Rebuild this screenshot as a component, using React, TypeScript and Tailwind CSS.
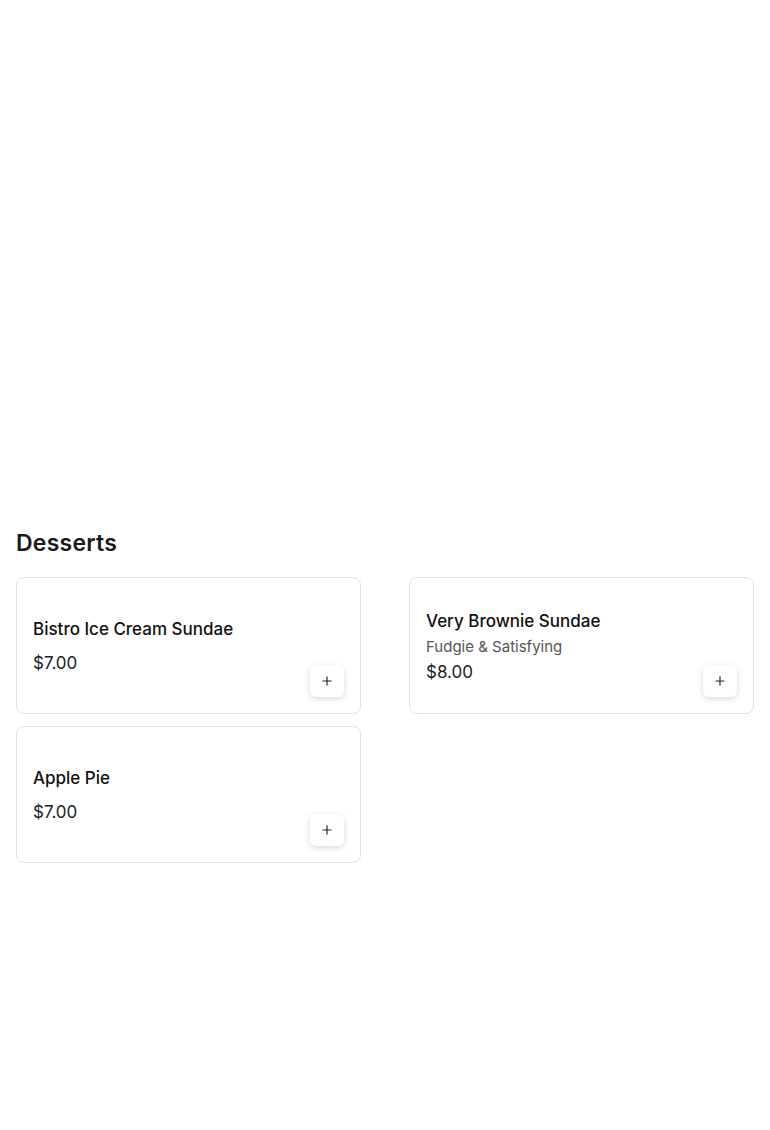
import { Plus } from "lucide-react";

type Item = { name: string; desc?: string; price: string };

const items: Item[] = [
  { name: "Bistro Ice Cream Sundae", price: "$7.00" },
  { name: "Very Brownie Sundae", desc: "Fudgie & Satisfying", price: "$8.00" },
  { name: "Apple Pie", price: "$7.00" },
];

function MenuCard({ item }: { item: Item }) {
  return (
    <div className="relative flex h-[137px] flex-col justify-center rounded-lg border border-[#e2e2e2] bg-white px-4">
      <div className="text-[17px] font-medium leading-[24px] text-[#111]">{item.name}</div>
      {item.desc && (
        <div className="mt-[4px] text-[15px] leading-[20px] text-[#555]">{item.desc}</div>
      )}
      <div
        className={
          item.desc
            ? "mt-[4px] text-[17px] leading-[22px] text-[#222]"
            : "mt-[11px] text-[17px] leading-[22px] text-[#222]"
        }
      >
        {item.price}
      </div>
      <button className="absolute bottom-4 right-4 flex h-8 w-[34px] items-center justify-center rounded-md bg-white shadow-[0_2px_6px_rgba(0,0,0,0.15)]">
        <Plus size={14} strokeWidth={2} className="text-[#222]" />
      </button>
    </div>
  );
}

export default function App() {
  return (
    <div className="min-h-[1130px] bg-white font-['Inter',sans-serif]">
      <div className="h-[527px]" />
      <section className="px-4">
        <h2 className="text-[23px] font-semibold leading-[32px] tracking-[0.25px] text-[#1a1a1a]">
          Desserts
        </h2>
        <div className="mt-[18px] grid grid-cols-2 gap-x-12 gap-y-3">
          {items.map((item) => (
            <MenuCard key={item.name} item={item} />
          ))}
        </div>
      </section>
    </div>
  );
}
